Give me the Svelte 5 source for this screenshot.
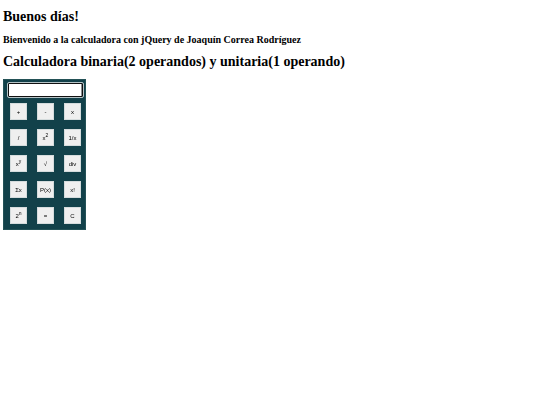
<script>
  import { onMount } from "svelte";

  let display = $state("");
  let pending = $state(null);
  let screen;

  const keys = [
    { id: "add", text: "+", binary: (a, b) => a + b },
    { id: "sub", text: "-", binary: (a, b) => a - b },
    { id: "mul", text: "x", binary: (a, b) => a * b },
    { id: "frac", text: "/", binary: (a, b) => a / b },
    { id: "square", text: "x", sup: "2", unary: (a) => a * a },
    { id: "inverse", text: "1/x", unary: (a) => 1 / a },
    { id: "pow", text: "x", sup: "y", binary: (a, b) => a ** b },
    { id: "root", text: "√", unary: (a) => Math.sqrt(a) },
    { id: "div", text: "div", binary: (a, b) => Math.trunc(a / b) },
    { id: "sum", text: "Σx", list: (xs) => xs.reduce((a, b) => a + b, 0) },
    { id: "prod", text: "P(x)", list: (xs) => xs.reduce((a, b) => a * b, 1) },
    { id: "fact", text: "x!", unary: factorial },
    { id: "pow2", text: "2", sup: "n", unary: (a) => 2 ** a },
    { id: "equals", text: "=" },
    { id: "clear", text: "C" }
  ];

  function factorial(n) {
    let result = 1;
    for (let i = 2; i <= n; i++) result *= i;
    return result;
  }

  function press(key) {
    if (key.id === "clear") {
      display = "";
      pending = null;
    } else if (key.id === "equals") {
      if (pending) display = String(pending.op(pending.value, Number(display)));
      pending = null;
    } else if (key.unary) {
      display = String(key.unary(Number(display)));
    } else if (key.list) {
      // comma separated values
      display = String(key.list(display.split(",").map(Number)));
    } else {
      pending = { op: key.binary, value: Number(display) };
      display = "";
    }
    screen.focus();
  }

  onMount(() => screen.focus());
</script>

<main>
  <h1>Buenos días!</h1>
  <h2>Bienvenido a la calculadora con jQuery de Joaquín Correa Rodríguez</h2>
  <h1>Calculadora binaria(2 operandos) y unitaria(1 operando)</h1>

  <div class="calculator">
    <input
      type="text"
      aria-label="Pantalla"
      bind:value={display}
      bind:this={screen} />
    <div class="keys">
      {#each keys as key (key.id)}
        <button type="button" onclick={() => press(key)}>
          <span>{key.text}{#if key.sup}<sup>{key.sup}</sup>{/if}</span>
        </button>
      {/each}
    </div>
  </div>
</main>

<style>
  main {
    padding: 9px 3px;
    font-family: "Liberation Serif", "Times New Roman", serif;
    color: #000;
  }
  h1 {
    margin: 0;
    font-size: 14px;
    line-height: 16px;
  }
  h2 {
    margin: 7px 0;
    font-size: 10px;
    line-height: 15px;
  }
  .calculator {
    box-sizing: border-box;
    width: fit-content;
    margin-top: 9px;
    padding: 3px 2px 5px 4px;
    border: 1px solid #245257;
    background: #12414a;
  }
  input {
    display: block;
    box-sizing: border-box;
    width: 75px;
    height: 14px;
    padding: 0 1px;
    border: 1px solid #101010;
    border-radius: 1px;
    outline: 1px solid #b5c3c6;
    background: #fff;
    box-shadow: inset -1px 0 #8a8f92;
    font-family: "Liberation Sans", Arial, sans-serif;
    font-size: 6px;
    text-align: right;
  }
  .keys {
    display: grid;
    grid-template-columns: repeat(3, 17px);
    gap: 9px 10px;
    margin: 6px 2px 0;
  }
  button {
    box-sizing: border-box;
    width: 17px;
    height: 17px;
    padding: 0;
    border: 1px solid #d5dcdd;
    background: #efefef;
    color: #000;
    font-family: "Liberation Sans", Arial, sans-serif;
    font-size: 6px;
    line-height: 8px;
  }
  sup {
    font-size: 5px;
    line-height: 0;
  }
</style>
